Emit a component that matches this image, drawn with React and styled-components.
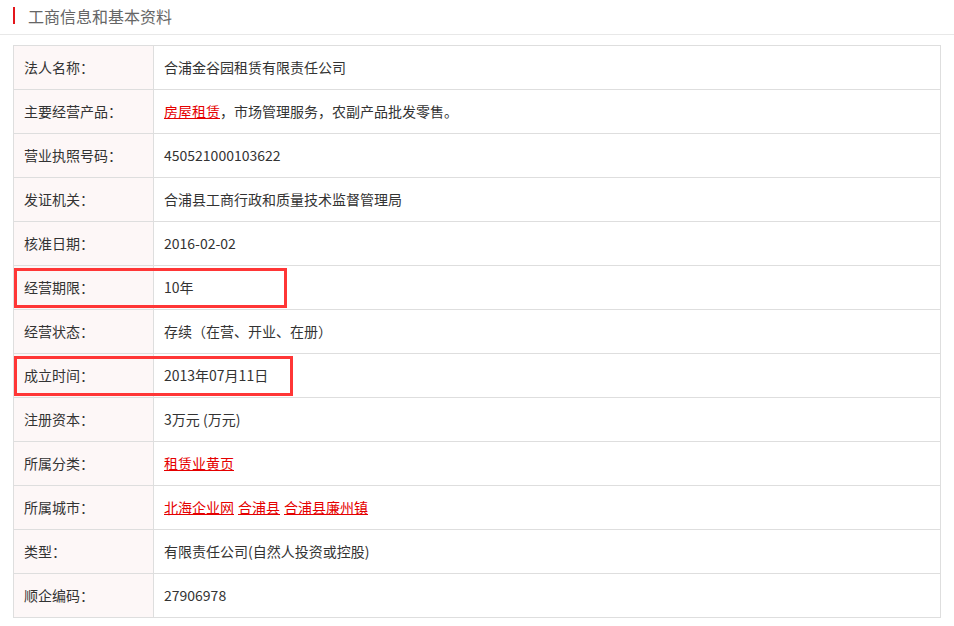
import React from "react";
import styled, { createGlobalStyle } from "styled-components";

const GlobalStyle = createGlobalStyle`
  body {
    margin: 0;
    background: #fff;
    font-family: "Noto Sans CJK SC", "Microsoft YaHei", sans-serif;
    color: #333;
  }
`;

const Page = styled.div`
  width: 954px;
  height: 626px;
  overflow: hidden;
`;

const Header = styled.div`
  display: flex;
  align-items: center;
  height: 31px;
  padding: 0 0 3px 13px;
  border-bottom: 1px solid #e8e8e8;
`;

const Bar = styled.span`
  width: 2px;
  height: 17px;
  background: #e4161c;
  margin-right: 13px;
`;

const Title = styled.h2`
  margin: 0;
  font-size: 16px;
  font-weight: 400;
  color: #666;
  line-height: 1;
`;

const Table = styled.table`
  margin: 10px 0 0 13px;
  width: 928px;
  border-collapse: collapse;
  font-size: 14px;
`;

const Row = styled.tr`
  height: 44px;
`;

const Label = styled.td`
  position: relative;
  width: 129px;
  padding: 0 0 2px 10px;
  background: #fdf7f7;
  border: 1px solid #dedede;
  color: #333;
  white-space: nowrap;

  /* annotation box drawn over the row */
  &::after {
    content: "";
    display: ${({ $mark }) => ($mark ? "block" : "none")};
    position: absolute;
    left: 0;
    top: 2px;
    width: ${({ $mark }) => $mark || 0}px;
    height: 40px;
    border: 3px solid #ff3636;
    box-sizing: border-box;
    z-index: 2;
  }
`;

const Value = styled.td`
  padding: 0 0 2px 10px;
  border: 1px solid #dedede;
  color: #333;
  white-space: nowrap;
`;

const Link = styled.a`
  color: #e50000;
  text-decoration: underline;
  cursor: pointer;
  margin-right: ${({ $tight }) => ($tight ? 0 : 4)}px;
`;

const rows = [
  { label: "法人名称：", value: "合浦金谷园租赁有限责任公司" },
  {
    label: "主要经营产品：",
    value: (
      <>
        <Link $tight>房屋租赁</Link>，市场管理服务，农副产品批发零售。
      </>
    ),
  },
  { label: "营业执照号码：", value: "450521000103622" },
  { label: "发证机关：", value: "合浦县工商行政和质量技术监督管理局" },
  { label: "核准日期：", value: "2016-02-02" },
  { label: "经营期限：", value: "10年", mark: 273 },
  { label: "经营状态：", value: "存续（在营、开业、在册）" },
  { label: "成立时间：", value: "2013年07月11日", mark: 279 },
  { label: "注册资本：", value: "3万元 (万元)" },
  { label: "所属分类：", value: <Link>租赁业黄页</Link> },
  {
    label: "所属城市：",
    value: (
      <>
        <Link>北海企业网</Link>
        <Link>合浦县</Link>
        <Link>合浦县廉州镇</Link>
      </>
    ),
  },
  { label: "类型：", value: "有限责任公司(自然人投资或控股)" },
  { label: "顺企编码：", value: "27906978" },
];

export default function App() {
  return (
    <Page>
      <GlobalStyle />
      <Header>
        <Bar />
        <Title>工商信息和基本资料</Title>
      </Header>
      <Table>
        <tbody>
          {rows.map((r) => (
            <Row key={r.label}>
              <Label $mark={r.mark}>{r.label}</Label>
              <Value>{r.value}</Value>
            </Row>
          ))}
        </tbody>
      </Table>
    </Page>
  );
}
